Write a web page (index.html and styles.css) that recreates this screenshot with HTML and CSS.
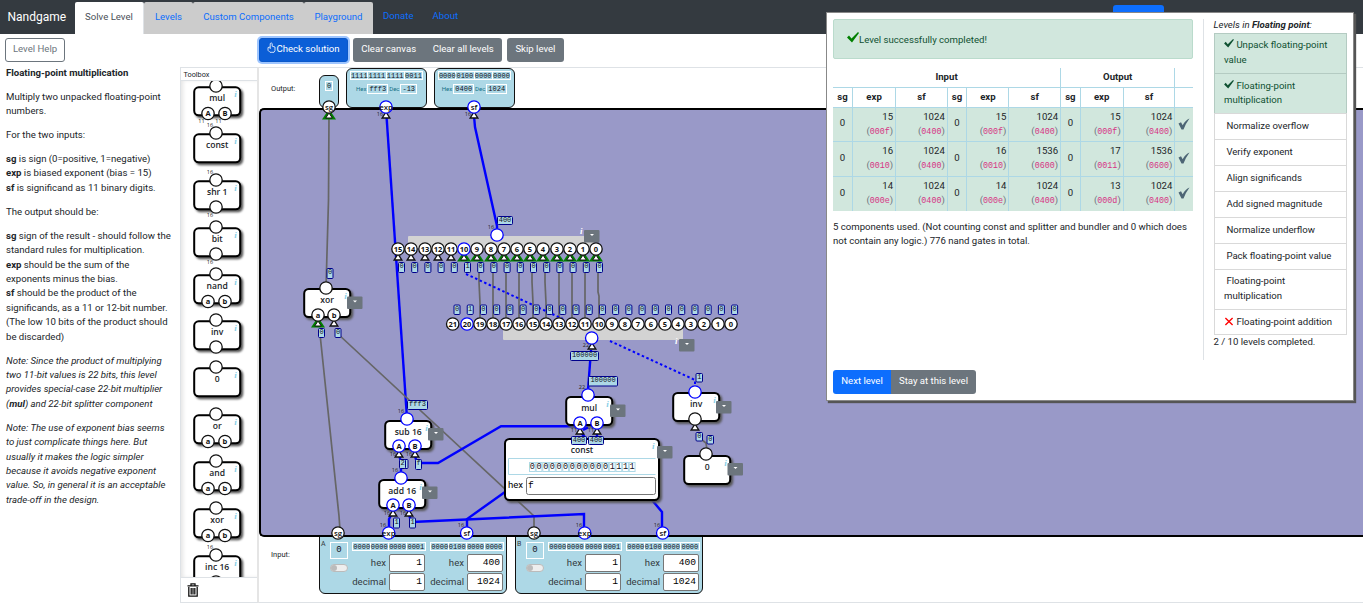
FILE: index.html
```html
<!DOCTYPE html>
<html lang="en">
<head>
<meta charset="utf-8">
<title>Nandgame</title>
<link rel="stylesheet" href="styles.css">
</head>
<body>
<header class="navbar">
  <span class="brand">Nandgame</span>
  <nav class="tabs">
    <a class="tab active tab-solve">Solve Level</a><a class="tab tab-levels">Levels</a><a class="tab tab-custom">Custom Components</a><a class="tab tab-play">Playground</a>
  </nav>
  <a class="link donate">Donate</a><a class="link about">About</a>
  <span class="login"></span>
</header>

<div class="toolbar">
  <div class="tool-left"><button class="btn outline">Level Help</button></div>
  <button class="btn primary focus check"><svg class="thumb" viewBox="0 0 9 11"><path d="M3.200 5V1.600Q4.200.2 5.200 1.600V4.200L8 5V8.500L7 10.300H3L1 8.300V5.500L3.200 5V7" fill="none" stroke="#fff" stroke-width=".8"/></svg>Check solution</button>
  <div class="group"><button class="btn secondary">Clear canvas</button><button class="btn secondary">Clear all levels</button></div>
  <button class="btn secondary">Skip level</button>
</div>

<main class="workspace">
  <aside class="help">
    <p><b>Floating-point multiplication</b></p>
    <p>Multiply two unpacked floating-point<br>numbers.</p>
    <p>For the two inputs:</p>
    <p><b>sg</b> is sign (0=positive, 1=negative)<br><b>exp</b> is biased exponent (bias = 15)<br><b>sf</b> is significand as 11 binary digits.</p>
    <p>The output should be:</p>
    <p><b>sg</b> sign of the result - should follow the<br>standard rules for multiplication.<br><b>exp</b> should be the sum of the<br>exponents minus the bias.<br><b>sf</b> should be the product of the<br>significands, as a 11 or 12-bit number.<br>(The low 10 bits of the product should<br>be discarded)</p>
    <p><i>Note: Since the product of multiplying<br>two 11-bit values is 22 bits, this level<br>provides special-case 22-bit multiplier<br>(<b>mul</b>) and 22-bit splitter component</i></p>
    <p><i>Note: The use of exponent bias seems<br>to just complicate things here. But<br>usually it makes the logic simpler<br>because it avoids negative exponent<br>value. So, in general it is an acceptable<br>trade-off in the design.</i></p>
  </aside>

  <section class="toolbox">
    <div class="toolbox-title">Toolbox</div>
    <div class="toolbox-list" id="toolbox"></div>
    <div class="trash"><svg viewBox="0 0 12 14"><path d="M0.500 2.800H11.500M4 2.500V.8H8V2.500M1.800 4V13.200H10.200V4M4.200 5V11.500M6 5V11.500M7.800 5V11.500" fill="none" stroke="#111" stroke-width="1.300"/></svg></div>
  </section>

  <section class="canvas">
    <div class="outputs">
      <span class="row-label">Output:</span>
      <div class="port port-sg"><span class="bits">0</span></div>
      <div class="port port-word">
        <div class="words"><span>1111</span><span>1111</span><span>1111</span><span>0011</span></div>
        <div class="bases">Hex<span class="bits">fff3</span>Dec<span class="bits">-13</span></div>
      </div>
      <div class="port port-word">
        <div class="words"><span>0000</span><span>0100</span><span>0000</span><span>0000</span></div>
        <div class="bases">Hex<span class="bits">0400</span>Dec<span class="bits">1024</span></div>
      </div>
    </div>
    <div class="board"><svg id="diagram" viewBox="261 110 1102 425" width="1102" height="425"></svg></div>
    <div class="inputs" id="inputs"><span class="row-label">Input:</span></div>
  </section>
</main>

<section class="dialog">
  <div class="result">
    <div class="alert"><svg class="tick" viewBox="0 0 12 11"><path d="M0 5.500 2 3.500 4.500 6.500 11 0 12 1 5 10.500Z"/></svg>Level successfully completed!</div>
    <table class="tests">
      <colgroup><col class="c-sg"><col class="c-exp"><col class="c-sf"><col class="c-sg"><col class="c-exp2"><col class="c-sf"><col class="c-sg"><col class="c-exp"><col class="c-sf"><col class="c-ok"></colgroup>
      <thead>
        <tr><th colspan="6">Input</th><th colspan="3">Output</th><th></th></tr>
        <tr><th>sg</th><th>exp</th><th>sf</th><th>sg</th><th>exp</th><th>sf</th><th>sg</th><th>exp</th><th>sf</th><th></th></tr>
      </thead>
      <tbody id="tests"></tbody>
    </table>
    <p class="summary">5 components used. (Not counting const and splitter and bundler and 0 which does<br>not contain any logic.) 776 nand gates in total.</p>
    <div class="group actions"><button class="btn primary next">Next level</button><button class="btn secondary stay">Stay at this level</button></div>
  </div>
  <aside class="levels">
    <div><i>Levels in <b>Floating point</b>:</i></div>
    <ul>
      <li class="done"><svg viewBox="0 0 12 11"><path d="M0 5.500 2 3.500 4.500 6.500 11 0 12 1 5 10.500Z"/></svg> Unpack floating-point<br>value</li>
      <li class="done"><svg viewBox="0 0 12 11"><path d="M0 5.500 2 3.500 4.500 6.500 11 0 12 1 5 10.500Z"/></svg> Floating-point<br>multiplication</li>
      <li>&nbsp;Normalize overflow</li>
      <li>&nbsp;Verify exponent</li>
      <li>&nbsp;Align significands</li>
      <li>&nbsp;Add signed magnitude</li>
      <li>&nbsp;Normalize underflow</li>
      <li>&nbsp;Pack floating-point value</li>
      <li>&nbsp;Floating-point<br>multiplication</li>
      <li><svg viewBox="0 0 10 10"><path d="M1 1 9 9M9 1 1 9" stroke="red" stroke-width="1.500"/></svg> Floating-point addition</li>
    </ul>
    <div>2 / 10 levels completed.</div>
  </aside>
</section>
<script src="app.js"></script>
</body>
</html>
```
FILE: styles.css
```css
* { box-sizing: border-box; }
body { margin: 0; height: 605px; overflow: hidden; position: relative; background: #fff; color: #212529; font: 9.6px/14.4px Roboto, sans-serif; }
button { font: inherit; }

.navbar { height: 34px; background: #343a40; display: flex; align-items: stretch; color: #0d6efd; }
.brand { width: 75px; padding-left: 7.5px; color: #fff; font-size: 12px; line-height: 34px; }
.tabs { display: flex; padding-top: 2px; }
.tab { background: #ccc; border-radius: 2px 2px 0 0; text-align: center; line-height: 30px; height: 32px; color: #0d6efd; }
.tab.active { background: #fff; color: #495057; border-right: 1px solid #dee2e6; }
.tab-solve { width: 69px; }
.tab-levels { width: 49px; }
.tab-custom { width: 111px; }
.tab-play { width: 69px; }
.link { line-height: 32px; padding-left: 10px; }
.about { padding-left: 19px; }
.login { margin: 5px 199px 0 auto; width: 51px; background: #0d6efd; border-radius: 3px; }

.toolbar { height: 33px; padding-top: 4px; display: flex; align-items: flex-start; gap: 5px; }
.tool-left { width: 249px; padding-left: 5px; }
.btn { height: 24px; padding: 0 7px 2px; border: 1px solid transparent; border-radius: 3px; line-height: 20px; white-space: nowrap; color: #fff; }
.outline { border-color: #6c757d; color: #6c757d; background: #fff; width: 60px; padding: 0 0 2px; }
.primary { background: #0d6efd; }
.secondary { background: #6c757d; }
.toolbar .secondary { padding: 0 7.3px 2px; }
.check { margin-left: 5px; width: 89px; padding: 0 0 2px; background: #0b5ed7; border-color: #0a58ca; }
.focus { box-shadow: 0 0 0 2px #9ec5fe; }
.thumb { width: 9px; height: 11px; vertical-align: -1px; }
.group { display: flex; }
.group .btn:first-child { border-radius: 3px 0 0 3px; }
.group .btn:last-child { border-radius: 0 3px 3px 0; }

.workspace { display: flex; height: 536px; }
.help { width: 180px; padding-left: 6px; white-space: nowrap; }
.help p { margin: 0 0 9.600px; }
.help p:first-child { margin-top: -1.500px; }

.toolbox { width: 79px; border: 1px solid #dee2e6; border-right: 2px solid #e5e5e5; display: flex; flex-direction: column; }
.toolbox-title { height: 13px; border-bottom: 1px solid #dee2e6; font-size: 7.300px; line-height: 13px; padding-left: 2.5px; }
.toolbox-list { flex: 1; overflow: hidden; box-shadow: inset 3px 0 4px -1px #e4e4e4; min-height: 0; }
.toolbox-list svg { display: block; width: 76px; height: 46.9px; overflow: visible; }
.trash { height: 25px; border-top: 1px solid #dee2e6; padding: 5px 0 0 6px; }
.trash svg { width: 12px; height: 14px; display: block; }

.canvas { flex: 1; border: solid #dee2e6; border-width: 1px 0; display: flex; flex-direction: column; min-width: 0; }
.row-label { font-size: 7.5px; line-height: 12px; padding-left: 12px; flex: none; }
.outputs { height: 40px; display: flex; align-items: flex-end; gap: 7px; }
.outputs .row-label { width: 53px; padding-bottom: 13px; }
.port { background: #add8e6; border: 1px solid #111; border-radius: 6px; }
.port-sg { width: 20px; height: 33px; text-align: center; padding-top: 2px; }
.port-word { width: 81px; height: 40px; padding-top: 2px; text-align: center; }
.bits, .words { font: 7px/8px "Liberation Mono", monospace; color: #112; }
.bits { border: 1px solid #fff; padding: 0 1px; display: inline-block; }
.words { display: flex; justify-content: center; }
.words span { border: 1px solid #fff; border-left-width: 0; width: 18.300px; height: 9px; line-height: 8px; text-align: center; }
.words span:first-child { border-left-width: 1px; }
.bases { display: flex; justify-content: center; gap: 1px; font-size: 6px; color: #157085; line-height: 10px; padding-top: 4px; }
.board { height: 429px; background: #9999c8; border: 2px solid #000; border-right: 0; border-radius: 5px 0 0 5px; position: relative; z-index: 1; }
#diagram { display: block; overflow: visible; }
.inputs { display: flex; gap: 8px; align-items: flex-start; }
.inputs .row-label { width: 52px; padding-top: 12px; }
.source { width: 188px; height: 58px; margin-top: -1px; padding-top: 5px; background: #add8e6; border: 1px solid #111; border-radius: 0 0 6px 6px; display: grid; grid-template-columns: 9px 22px 76px 78px; color: #343a40; }
.source-name { font: 7px/8px Roboto, sans-serif; margin-top: -2px; padding-left: 1px; }
.source-bit .bits { display: block; width: 18px; height: 17px; font-size: 9px; line-height: 14px; margin-left: 1px; text-align: center; }
.toggle { width: 18px; height: 8px; border: 1px solid #bbb; border-radius: 5px; background: #eee; margin: 5px 0 0 1px; }
.toggle::before { content: ""; display: block; width: 6px; height: 6px; border-radius: 50%; background: #bbb; }
.source .words { justify-content: flex-end; padding-right: 1.500px; }
.field { display: flex; justify-content: flex-end; align-items: center; gap: 3px; margin-bottom: 1px; padding-right: 2px; }
.words + .field { margin-top: 3px; }
.field span:last-child { width: 36px; height: 18px; background: #fff; border: 1px solid #767676; border-radius: 2px; text-align: right; padding-right: 2px; font: 9.6px/15px "Liberation Mono", monospace; color: #000; }

.wire { fill: none; stroke: #666; stroke-width: 1.700; }
.wire.on { stroke: #00f; stroke-width: 2.400; }
.wire.dotted { stroke-width: 2; stroke-dasharray: 2.500 2.500; }
.box { fill: #fff; stroke: #000; stroke-width: 2; filter: drop-shadow(2px 2px 1px #555); }
.pin { fill: #fff; stroke: #111; stroke-width: 1.300; }
.pin.on { stroke: #00f; }
.name { font: 600 8.600px "Open Sans", sans-serif; fill: #212529; text-anchor: middle; }
.pin-name { font: 600 7.800px "Open Sans", sans-serif; fill: #111; text-anchor: middle; }
.num { font: 700 7.500px "Open Sans", sans-serif; fill: #111; text-anchor: middle; }
.width { font: 5.500px "Open Sans", sans-serif; fill: #222; text-anchor: middle; }
.info { font: italic 700 9px "Liberation Serif", serif; fill: #87cee6; }
.info.light { fill: #fff; }
.tag { fill: #add8e6; stroke: #00008b; stroke-width: 1; }
.tag-text { font: 7px "Liberation Mono", monospace; fill: #112; text-anchor: middle; }
.bit-text { font: 8.500px "Liberation Mono", monospace; fill: #112; text-anchor: middle; }
.menu { fill: #6c757d; }

.dialog { position: absolute; z-index: 5; left: 826px; top: 12px; width: 528px; height: 389px; background: #fff; border: 1px solid #888; box-shadow: 2px 2px 1px #555; padding: 6px; display: flex; }
.result { width: 360px; display: flex; flex-direction: column; flex: none; }
.alert { height: 40px; flex: none; background: #d1e7dd; border: 1px solid #badbcc; border-radius: 2px; color: #0f5132; padding: 13px 13px; white-space: nowrap; }
.tick { width: 12px; height: 11px; fill: #008000; vertical-align: 0; margin-top: -2px; }
.tests { margin-top: 8.500px; width: 360px; table-layout: fixed; border-collapse: collapse; }
.c-sg { width: 19.500px; } .c-exp { width: 43px; } .c-exp2 { width: 42px; } .c-sf { width: 51.500px; } .c-ok { width: 18px; }
.tests th { height: 20px; padding: 0 0 1px; text-align: center; font-weight: 700; line-height: 14px; }
.tests tr:first-child th { padding: 0; height: 19.500px; }
.tests th + th, .tests td + td { border-left: 1px solid #add8e6; }
.tests tr + tr th, .tests td { border-top: 1px solid #add8e6; }
.tests td { height: 34.500px; padding: 0 2px 1px; text-align: right; background: #d1e7dd; line-height: 14px; }
.tests td.mid { text-align: center; padding: 0 0 2px; }
.tests .hex { color: #6c757d; line-height: 14.500px; }
.tests code { font: 8.400px "Liberation Mono", monospace; color: #d63384; }
.tests .mark { width: 12px; height: 12px; fill: #4d6575; vertical-align: middle; }
.summary { margin: 9px 0 0; white-space: nowrap; }
.actions { margin-top: auto; }
.next { width: 58px; padding: 0 0 2px; } .stay { width: 85px; padding: 0 0 2px; }
.levels { margin-left: 10px; border-left: 1px solid #dee2e6; padding: 0 0 0 9.500px; width: 144px; height: 341px; white-space: nowrap; }
.levels > div:first-child { line-height: 12px; padding-bottom: 1.700px; }
.levels ul { list-style: none; margin: 0; padding: 0; width: 133px; }
.levels li { border: 1px solid #d9d9d9; border-bottom-width: 0; padding: 4.800px 9px 5.700px 9.500px; }
.levels li:last-child { border-bottom-width: 1px; padding-bottom: 4.800px; }
.levels li.done { background: #d1e7dd; color: #0f5132; border-color: #b4cbc2; }
.levels li br { line-height: 14px; }
.levels svg { width: 10px; height: 9px; vertical-align: -1px; }
.levels .done svg { fill: #0f5132; vertical-align: 0; }
```
FILE: app.js
```js
const T = (cls, x, y, s) => `<text class="${cls}" x="${x}" y="${y}">${s}</text>`;
const wire = (pts, cls = '') => `<polyline class="wire ${cls}" points="${pts}"/>`;
const pin = (x, y, s = '', on = '', cls = 'num', r = 6.2) =>
  `<circle class="pin ${on}" cx="${x}" cy="${y}" r="${r}"/>` + T(cls, x, y + 2.6, s);
const tri = (x, y, green) => green
  ? `<path d="M${x} ${y - 6}L${x + 7} ${y + 4.5}H${x - 7}Z" fill="#008000"/><path d="M${x} ${y - 2}L${x + 3.3} ${y + 3}H${x - 3.3}Z" fill="#fff" stroke="#111"/>`
  : `<path d="M${x} ${y - 3}L${x + 3.8} ${y + 3}H${x - 3.8}Z" fill="#fff" stroke="#111" stroke-width="1.4"/>`;
const tag = (x, y, w, s, h = 10) =>
  `<rect class="tag" x="${x}" y="${y}" width="${w}" height="${h}" rx="1"/>` + T('tag-text', x + w / 2, y + 5.8, s);
const menu = (x, y) => `<rect class="menu" x="${x}" y="${y}" width="15.5" height="12.5" rx="1"/><path d="M${x + 6} ${y + 4}h4l-2 2z" fill="#fff"/>`;
const box = (x, y, s, w = 46, h = 28) =>
  `<rect class="box" x="${x}" y="${y}" width="${w}" height="${h}" rx="4.5"/>` + T('name', x + w / 2, y + 14, s) + T('info', x + w - 6, y + 9.5, 'i');

// Toolbox
const tools = [['mul', 'A', 'B', '', '11'], ['const', '', '', '16'], ['shr 1', '*', '', '16', '16'], ['bit', '*', '', '', '16'],
  ['nand', 'a', 'b'], ['inv', '*'], ['0'], ['or', 'a', 'b'], ['and', 'a', 'b'], ['xor', 'a', 'b'], ['inc 16', '*', '', '16']];
document.getElementById('toolbox').innerHTML = tools.map(([n, a, b, top, bottom]) => {
  let s = box(13.2, 6.3, n) + pin(35, 5);
  if (a === '*') s += pin(35, 32);
  else if (a) s += pin(27, 32.5, a) + pin(44, 32.5, b);
  if (top) s += T('width', 29, -1, top);
  if (bottom) s += b ? T('width', 20.5, 42, bottom) + T('width', 37.5, 42, bottom) : T('width', 29, 42, bottom);
  return `<svg viewBox="0 0 76 46.9">${s}</svg>`;
}).join('');

// Circuit
const outX = [398, 411, 425, 438, 451, 464, 477, 491, 504, 517, 530, 543, 557, 570, 583, 596];
const inX = [452.7, 467, 480, 493, 506, 519, 533, 546, 559, 572, 585, 599, 612, 625, 638, 651, 665, 678, 691, 704, 718, 731];
let d = '';
d += wire('329,116 328.5,200 326,288') + wire('386.5,116 407,418', 'on') + wire('474,116 475,127 497,226 497,235', 'on');
d += wire('320,334 339,516 340,530') + wire('338,334 534,516 534,530');
d += wire('418,463 438,463 501,426.3 580,426.3', 'on') + wire('467,530 467,519 505,492', 'on');
d += wire('412,522 584,514 584,530', 'on') + wire('652,500 662,512 662,530', 'on');
d += wire('392,514 389,519 389,530', 'on') + wire('399,454 401,463 401,478', 'on') + wire('409,514 411,522', 'on') + wire('415,456 417,463', 'on');
for (let i = 0; i < 10; i++) {
  const s = outX[6 + i] + 2, e = inX[2 + i];
  d += wire(i < 8 ? `${s},268 ${s},282 ${e},303 ${e},324` : `${s},268 ${s},292 ${e},296 ${e},324`);
}
d += '<rect x="408" y="236" width="186" height="12" fill="#d3d3d3" rx="1"/><rect x="503" y="326" width="180" height="14" fill="#d3d3d3" rx="1"/>';
d += wire('466,274 563,319', 'on dotted') + wire('610,341 695,380 695,388', 'on dotted');
d += wire('591,350 588,390', 'on');
d += T('info light', 580, 234, 'i') + T('info light', 675, 344, 'i') + menu(584, 230) + menu(679, 339);
outX.forEach((x, i) => { d += tri(x, 257, i > 4); });
outX.forEach((x, i) => { d += pin(x, 249, 15 - i, i === 5 ? 'on' : ''); });
outX.forEach((x, i) => { d += tag(398.5 + 13.2 * i, 262.5, 6, i === 5 ? 1 : 0); });
inX.forEach((x, i) => { d += tag(454 + 13.22 * i, 305, 6, i === 1 ? 1 : 0, 9.5) + pin(x, 324, 21 - i, i === 1 ? 'on' : ''); });
d += tag(497.5, 216.5, 15, '400', 8) + T('width', 491, 229, 16) + pin(497, 235, '', 'on');
d += T('width', 586, 347, 22) + tri(592, 346) + pin(591.7, 338, '', 'on') + tag(570.5, 351.5, 28, '100000', 9);

d += box(304.2, 289, 'xor') + menu(347, 296.5) + tri(318, 323, true) + tri(334, 323) + pin(326, 288) + pin(318, 315, 'a') + pin(334, 315, 'b');
d += tag(327, 268.5, 6, 0) + tag(318.5, 328.5, 6, 0, 9) + tag(335, 328.5, 6, 0, 9);

d += box(385.2, 421, 'sub 16') + menu(428, 428) + T('width', 401, 413, 16) + pin(407, 419, '', 'on');
d += T('width', 393, 456, 16) + T('width', 409, 456, 16) + tri(399, 454) + tri(415, 454) + pin(399, 446, 'A', 'on') + pin(415, 446, 'B', 'on');
d += tag(407.5, 400.5, 20, 'fff3', 9) + tag(402, 459.5, 6, '', 9) + tag(399.5, 459.5, 6, 2, 9) + tag(415.5, 459.5, 6, 'f');

d += box(379.2, 480, 'add 16') + menu(422, 486.5) + T('width', 395, 472, 16) + pin(401, 478, '', 'on');
d += T('width', 387, 515, 16) + T('width', 403, 515, 16) + tri(393, 513) + tri(409, 513) + pin(393, 505, 'A', 'on') + pin(409, 505, 'B', 'on');
d += tag(393.5, 518, 6, 1) + tag(409.5, 518, 6, 1);

d += box(566.2, 397, 'mul') + menu(610, 404.5) + tag(588.5, 376.5, 29, '100000', 9.5) + T('width', 582, 389, 22) + pin(588, 395, '', 'on');
d += `<rect class="box" x="505" y="439" width="154" height="61" rx="4.5"/>` + T('name', 582, 453, 'const') + T('info', 652, 449, 'i') + menu(657, 446);
d += '<path d="M655.5 458.5H508.5V474.5H655.5" fill="#fff" stroke="#add8e6"/>';
[...'0000000000001111'].forEach((b, i) => {
  d += `<rect x="${529.5 + i * 6.65}" y="462.5" width="5.8" height="9" fill="#fff" stroke="#add8e6"/>` + T('bit-text', 532.4 + i * 6.65, 469, b);
});
d += '<text x="508" y="487.5" font-size="9.6">hex</text><rect x="526.5" y="477.5" width="129" height="17" rx="2" fill="#fff" stroke="#767676"/><text x="528" y="488" font-family="Liberation Mono" font-size="9.6">f</text>';
d += wire('580,432 586,438', 'on') + wire('597,432 597,438', 'on') + wire('583,430 588,427.5', 'on') + T('width', 574, 432, 11) + T('width', 591, 432, 11) + tri(580, 431) + tri(597, 431) + pin(580, 423, 'A', 'on') + pin(597, 423, 'B', 'on');
d += tag(571.5, 436.5, 15, '400', 8) + tag(588.5, 436.5, 15, '400', 8);

d += box(673.2, 393, 'inv') + menu(716, 401) + tri(695, 427) + pin(695, 392, '', 'on') + pin(695, 419) + tag(696, 373.5, 6.5, 1, 8.5);
d += wire('702,440 706,443 707,450') + box(684.2, 456, '0') + menu(727.5, 463) + pin(706, 454) + tag(696, 432.5, 6.5, 0, 8.5) + tag(707, 435.5, 6.5, 0, 8.5);

d += tri(329, 115, true) + tri(386, 115) + tri(474, 115) + T('width', 380, 116, 16) + T('width', 468, 116, 16);
d += pin(329, 107, 'sg', '', 'pin-name') + pin(386, 107, 'exp', 'on', 'pin-name') + pin(474, 107, 'sf', 'on', 'pin-name');
[338, 534].forEach(x => {
  d += pin(x, 533, 'sg', '', 'pin-name') + pin(x + 50.7, 533, 'exp', 'on', 'pin-name') + pin(x + 128.7, 533, 'sf', 'on', 'pin-name');
  d += T('width', x + 45, 527, 16) + T('width', x + 123, 527, 16);
});
document.getElementById('diagram').innerHTML = d;

// Input sources
const words = s => `<div class="words">${s.split(' ').map(w => `<span>${w}</span>`).join('')}</div>`;
const field = (n, v) => `<div class="field"><span>${n}</span><span>${v}</span></div>`;
document.getElementById('inputs').innerHTML += ['A', 'B'].map(n => `<div class="source"><div class="source-name">${n}</div>
<div class="source-bit"><span class="bits">0</span><div class="toggle"></div></div>
<div>${words('0000 0000 0000 0001')}${field('hex', 1)}${field('decimal', 1)}</div>
<div>${words('0000 0100 0000 0000')}${field('hex', 400)}${field('decimal', 1024)}</div></div>`).join('');

// Test results: decimal / hex pairs
const rows = [
  [[15, '000f'], [1024, '0400'], [15, '000f'], [1024, '0400'], [15, '000f'], [1024, '0400']],
  [[16, '0010'], [1024, '0400'], [16, '0010'], [1536, '0600'], [17, '0011'], [1536, '0600']],
  [[14, '000e'], [1024, '0400'], [14, '000e'], [1024, '0400'], [13, '000d'], [1024, '0400']]];
document.getElementById('tests').innerHTML = rows.map(r => '<tr>' + r.map(([v, h], i) =>
  (i % 2 ? '' : '<td class="mid">0</td>') + `<td>${v}<div class="hex">(<code>${h}</code>)</div></td>`).join('') +
  '<td class="mid"><svg class="mark" viewBox="0 0 12 12"><path d="M.5 5.500 3 4.200 4.700 7.200Q7.500 2 11.500 .5 8 5 5.500 11.500H3.500Z"/></svg></td></tr>').join('');
```
